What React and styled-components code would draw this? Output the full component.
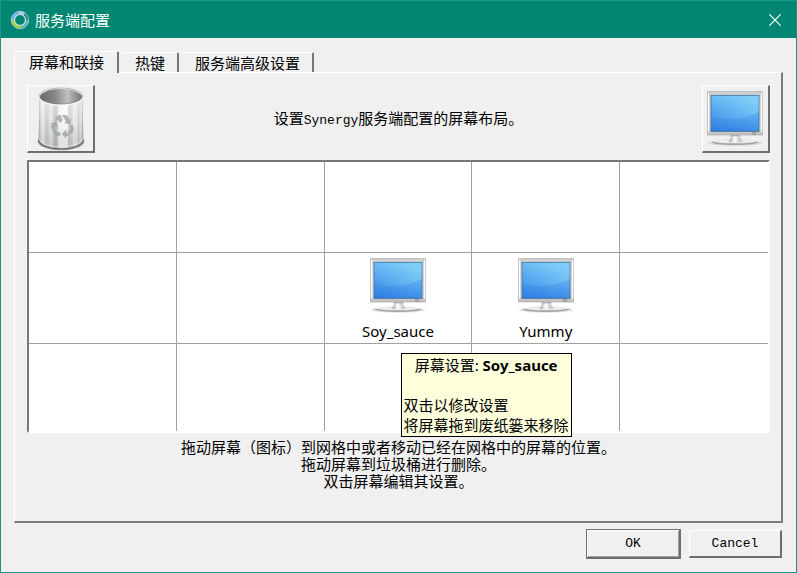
import React, { useState } from "react";
import styled, { createGlobalStyle, css } from "styled-components";

const GlobalStyle = createGlobalStyle`
  * { box-sizing: border-box; }
  body {
    margin: 0;
    color: #000;
    background: #f0f0f0;
    font: 15px/17px "Noto Sans CJK SC", sans-serif;
  }
  button { font: inherit; color: inherit; cursor: default; }
`;

const raised = css`
  border-style: solid;
  border-width: 1px 2px 2px 1px;
  border-color: #fff #6e6e6e #6e6e6e #fff;
`;

const Dialog = styled.div`
  display: flex;
  flex-direction: column;
  min-height: 100vh;
  border: 1px solid #1c9484;
  background: #f0f0f0;
`;

const TitleBar = styled.header`
  display: flex;
  align-items: center;
  height: 37px;
  padding: 0 9px;
  gap: 5px;
  background: #008673;
  color: #fff;
`;

const Title = styled.h1`
  flex: 1;
  margin: 0;
  font-size: 15px;
  line-height: 20px;
  font-weight: 400;
`;

const CloseButton = styled.button`
  display: flex;
  align-items: center;
  justify-content: center;
  width: 24px;
  height: 24px;
  padding: 0;
  border: 0;
  background: none;
`;

const Main = styled.main`
  display: flex;
  flex: 1;
  flex-direction: column;
  padding: 13px 13px 6px;
`;

const TabList = styled.div`
  display: flex;
  align-items: flex-end;
  gap: 2px;
  height: 21px;
`;

const Tab = styled.button`
  height: ${(p) => (p.$active ? 22 : 20)}px;
  margin-bottom: ${(p) => (p.$active ? -1 : 0)}px;
  padding: ${(p) => (p.$active ? "0 13px 2px 14px" : "0 12px 0 14px")};
  border: solid;
  border-width: 1px 2px 0 ${(p) => (p.$active ? 1 : 0)}px;
  border-color: #fff #777 #fff #fff;
  border-radius: 2px 2px 0 0;
  background: #f0f0f0;
  position: relative;
  z-index: ${(p) => (p.$active ? 1 : 0)};
`;

const Panel = styled.section`
  display: flex;
  flex: 1;
  flex-direction: column;
  padding: 12px 11px 12px 12px;
  border: solid;
  border-width: 1px 2px 2px 1px;
  border-color: #fff #7c7c7c #7c7c7c #fff;
`;

const ToolRow = styled.div`
  display: flex;
  align-items: center;
  justify-content: space-between;
  margin-bottom: 7px;
`;

const ToolButton = styled.button`
  ${raised}
  display: flex;
  align-items: center;
  justify-content: center;
  width: 68px;
  height: 68px;
  padding: 0;
  background: #f0f0f0;
`;

const Description = styled.p`
  margin: 0;
`;

const Latin = styled.span`
  font-family: "Liberation Mono", monospace;
  font-size: 13px;
`;

const ScreenFrame = styled.div`
  border: 2px solid;
  border-color: #777 #fff #fff #777;
  background: #fff;
`;

const ScreenTable = styled.table`
  width: 100%;
  table-layout: fixed;
  border-collapse: separate;
  border-spacing: 0;
`;

const ScreenCell = styled.td`
  position: relative;
  height: 91px;
  padding: 5px 0 0;
  vertical-align: top;
  text-align: center;
  border: solid #a0a0a0;
  border-width: 0 1px 1px 0;

  &:last-child { border-right-width: 0; }
  tr:last-child > & { height: 87px; border-bottom-width: 0; }
`;

const ScreenItem = styled.div`
  display: flex;
  flex-direction: column;
  align-items: center;
  gap: 7px;
  font: 15px/20px "Noto Sans", sans-serif;
`;

const Tooltip = styled.div`
  position: absolute;
  z-index: 2;
  left: 76px;
  top: 100px;
  padding: 1px 2px;
  border: 1px solid #000;
  background: #ffffdc;
  font: 15px/20px "Noto Sans", "Noto Sans CJK SC", sans-serif;
  text-align: left;
  white-space: nowrap;
`;

const TooltipTitle = styled.div`
  margin-bottom: 20px;
  text-align: center;
`;

const Hints = styled.div`
  margin-top: 5px;
  text-align: center;
`;

const Hint = styled.p`
  margin: 0;
`;

const Footer = styled.footer`
  display: flex;
  align-items: center;
  justify-content: flex-end;
  gap: 8px;
  padding: 0 14px 13px;
`;

const DialogButton = styled.button`
  ${raised}
  width: 93px;
  height: 28px;
  padding: 0;
  background: #f0f0f0;
  font: 13px/17px "Liberation Mono", monospace;
  ${(p) =>
    p.$default &&
    css`
      width: 95px;
      height: 30px;
      border-color: #6e6e6e;
      box-shadow: inset 1px 1px 0 #fff, inset -1px -1px 0 #a0a0a0;
    `}
`;

function AppIcon() {
  return (
    <svg width="20" height="20" viewBox="0 0 20 20" fill="none" strokeWidth="3.2" aria-hidden="true">
      <circle cx="10" cy="10" r="7.2" stroke="#6cb5b5" />
      <path d="M2.8 10A7.2 7.2 0 0 1 9 2.9" stroke="#78aef0" />
      <path d="M9 2.9A7.2 7.2 0 0 1 14.2 4.1" stroke="#a9cfe0" />
      <path d="M14.2 4.1A7.2 7.2 0 0 1 17.2 10" stroke="#2e8395" />
      <path d="M17.2 10A7.2 7.2 0 0 1 10 17.2" stroke="#68aeb0" />
      <path d="M10 17.2A7.2 7.2 0 0 1 2.8 10" stroke="#a5cf3a" />
      <circle cx="10" cy="10" r="5.5" stroke="#d3ebea" strokeWidth="1.1" />
      <circle cx="10" cy="10" r="8.8" stroke="#b4d9df" strokeWidth="0.6" />
    </svg>
  );
}

function BinIcon() {
  return (
    <svg width="48" height="64" viewBox="50 20 144 192" aria-hidden="true">
      <defs>
        <linearGradient id="binBody" x1="0" x2="1">
          <stop offset="0" stopColor="#909090" />
          <stop offset=".05" stopColor="#d6d6d6" />
          <stop offset=".12" stopColor="#e8e8e8" />
          <stop offset=".15" stopColor="#c0c0c0" />
          <stop offset=".22" stopColor="#c8c8c8" />
          <stop offset=".25" stopColor="#e2e2e2" />
          <stop offset=".32" stopColor="#d4d4d4" />
          <stop offset=".35" stopColor="#b2b2b2" />
          <stop offset=".42" stopColor="#bdbdbd" />
          <stop offset=".45" stopColor="#eef2f2" />
          <stop offset=".64" stopColor="#fafafa" />
          <stop offset=".67" stopColor="#c2c2c2" />
          <stop offset=".75" stopColor="#cbcbcb" />
          <stop offset=".78" stopColor="#e6e6e6" />
          <stop offset=".86" stopColor="#dddddd" />
          <stop offset=".89" stopColor="#c0c0c0" />
          <stop offset=".95" stopColor="#dddddd" />
          <stop offset="1" stopColor="#888888" />
        </linearGradient>
        <linearGradient id="binInside" x1="0" x2="1">
          <stop offset="0" stopColor="#696969" />
          <stop offset=".35" stopColor="#858585" />
          <stop offset=".65" stopColor="#c0c0c0" />
          <stop offset="1" stopColor="#6e6e6e" />
        </linearGradient>
        <linearGradient id="binShade" x1="0" x2="0" y1="0" y2="1">
          <stop offset="0" stopColor="#fff" stopOpacity=".6" />
          <stop offset=".5" stopColor="#fff" stopOpacity=".2" />
          <stop offset="1" stopColor="#777" stopOpacity=".2" />
        </linearGradient>
      </defs>
      <ellipse cx="122" cy="184" rx="70" ry="26" fill="#555" opacity=".45" />
      <path d="M57 47L55 182C58 214 186 214 189 182L187 47Z" fill="url(#binBody)" />
      <path d="M57 47L55 182C58 214 186 214 189 182L187 47Z" fill="url(#binShade)" />
      <path d="M54 178C58 215 186 215 190 178" fill="none" stroke="#6d6d6d" strokeWidth="4" />
      <path d="M56 175C62 207 182 207 188 175" fill="none" stroke="#ededed" strokeWidth="2" />
      <ellipse cx="122" cy="49" rx="65" ry="25" fill="url(#binInside)" stroke="#fafafa" strokeWidth="4" />
      <ellipse cx="122" cy="47" rx="65" ry="24" fill="none" stroke="#777" strokeWidth="1.5" />
      <g fill="#a4a8aa" opacity=".85">
        <path d="M103 119L112 106Q115 103 121 105L128 120L119 128L112 116L108 123Z" />
        <path d="M124 104H137Q141 105 144 111L148 118L153 115L148 132L131 128L137 124L127 108Z" />
        <path d="M148 135L157 133L160 143Q162 149 157 156L152 162L141 154L151 146Z" />
        <path d="M149 165L138 168V175L124 161L138 147V154L149 165Z" />
        <path d="M120 155V167H109Q103 166 99 158L95 152L105 147L110 155Z" />
        <path d="M91 128L107 125L113 141L107 138L101 150L92 145Q90 140 94 133Z" />
      </g>
    </svg>
  );
}

function MonitorIcon({ id }) {
  return (
    <svg width="56" height="56" viewBox="54 92 168 168" aria-hidden="true">
      <defs>
        <linearGradient id={`${id}-screen`} x1=".1" y1="1" x2=".4" y2="0">
          <stop offset="0" stopColor="#2b7de4" />
          <stop offset="1" stopColor="#76c6f7" />
        </linearGradient>
        <linearGradient id={`${id}-gloss`} x1="0" x2="1">
          <stop offset="0" stopColor="#70c0f8" stopOpacity=".1" />
          <stop offset="1" stopColor="#94dcfa" stopOpacity=".4" />
        </linearGradient>
        <linearGradient id={`${id}-bezel`} x1="0" x2="0" y1="0" y2="1">
          <stop offset="0" stopColor="#c4c4c4" />
          <stop offset=".12" stopColor="#ededed" />
          <stop offset=".85" stopColor="#e4e4e4" />
          <stop offset="1" stopColor="#b8b8b8" />
        </linearGradient>
        <linearGradient id={`${id}-metal`} x1="0" x2="1">
          <stop offset="0" stopColor="#999" />
          <stop offset=".45" stopColor="#fff" />
          <stop offset="1" stopColor="#aaa" />
        </linearGradient>
      </defs>
      <ellipse cx="138" cy="248" rx="82" ry="8" fill="#888" opacity=".22" />
      <ellipse cx="138" cy="246" rx="70" ry="8" fill="#a4a4a4" />
      <ellipse cx="138" cy="243" rx="66" ry="6" fill="#ececec" />
      <path d="M118 243Q125 240 126 224H153Q154 240 161 243Q139 250 118 243Z" fill={`url(#${id}-metal)`} />
      <rect x="125" y="224" width="29" height="4" fill="#888" opacity=".6" />
      <rect x="55" y="94" width="166" height="130" fill={`url(#${id}-bezel)`} stroke="#b0b0b0" strokeWidth="2" />
      <path d="M62 96V215M214 96V215" stroke="#c0c0c0" strokeWidth="2" />
      <path d="M59 97V214M218 97V214" stroke="#fff" strokeWidth="3" />
      <rect x="66" y="105" width="144" height="108" fill={`url(#${id}-screen)`} stroke="#49759f" strokeWidth="3" />
      <path d="M67 106H209V155Q172 177 110 176Q86 175 67 170Z" fill={`url(#${id}-gloss)`} />
      <ellipse cx="195" cy="219" rx="5" ry="4" fill="#bbb" stroke="#777" strokeWidth="2" />
    </svg>
  );
}

const tabs = ["屏幕和联接", "热键", "服务端高级设置"];
const screens = [
  [null, null, null, null, null],
  [null, null, "Soy_sauce", "Yummy", null],
  [null, null, null, null, null],
];

export default function App() {
  const [active, setActive] = useState(0);
  return (
    <>
      <GlobalStyle />
      <Dialog role="dialog" aria-labelledby="dialog-title">
        <TitleBar>
          <AppIcon />
          <Title id="dialog-title">服务端配置</Title>
          <CloseButton aria-label="关闭">
            <svg width="12" height="12" viewBox="0 0 12 12" stroke="#fff" strokeWidth="1.2" aria-hidden="true">
              <path d="M0 0L12 12M12 0L0 12" />
            </svg>
          </CloseButton>
        </TitleBar>
        <Main>
          <TabList role="tablist">
            {tabs.map((label, i) => (
              <Tab
                key={label}
                id={`tab-${i}`}
                role="tab"
                aria-selected={active === i}
                aria-controls="tab-panel"
                $active={active === i}
                onClick={() => setActive(i)}
              >
                {label}
              </Tab>
            ))}
          </TabList>
          <Panel id="tab-panel" role="tabpanel" aria-labelledby={`tab-${active}`}>
            <ToolRow>
              <ToolButton aria-label="垃圾桶"><BinIcon /></ToolButton>
              <Description>设置<Latin>Synergy</Latin>服务端配置的屏幕布局。</Description>
              <ToolButton aria-label="新屏幕"><MonitorIcon id="new" /></ToolButton>
            </ToolRow>
            <ScreenFrame>
              <ScreenTable aria-label="屏幕布局">
                <tbody>
                  {screens.map((row, r) => (
                    <tr key={r}>
                      {row.map((name, c) => (
                        <ScreenCell key={c}>
                          {name && (
                            <ScreenItem>
                              <MonitorIcon id={name} />
                              <span>{name}</span>
                            </ScreenItem>
                          )}
                          {name === "Soy_sauce" && (
                            <Tooltip role="tooltip">
                              <TooltipTitle>屏幕设置: <b>{name}</b></TooltipTitle>
                              <div>双击以修改设置</div>
                              <div>将屏幕拖到废纸篓来移除</div>
                            </Tooltip>
                          )}
                        </ScreenCell>
                      ))}
                    </tr>
                  ))}
                </tbody>
              </ScreenTable>
            </ScreenFrame>
            <Hints>
              <Hint>拖动屏幕（图标）到网格中或者移动已经在网格中的屏幕的位置。</Hint>
              <Hint>拖动屏幕到垃圾桶进行删除。</Hint>
              <Hint>双击屏幕编辑其设置。</Hint>
            </Hints>
          </Panel>
        </Main>
        <Footer>
          <DialogButton $default>OK</DialogButton>
          <DialogButton>Cancel</DialogButton>
        </Footer>
      </Dialog>
    </>
  );
}
